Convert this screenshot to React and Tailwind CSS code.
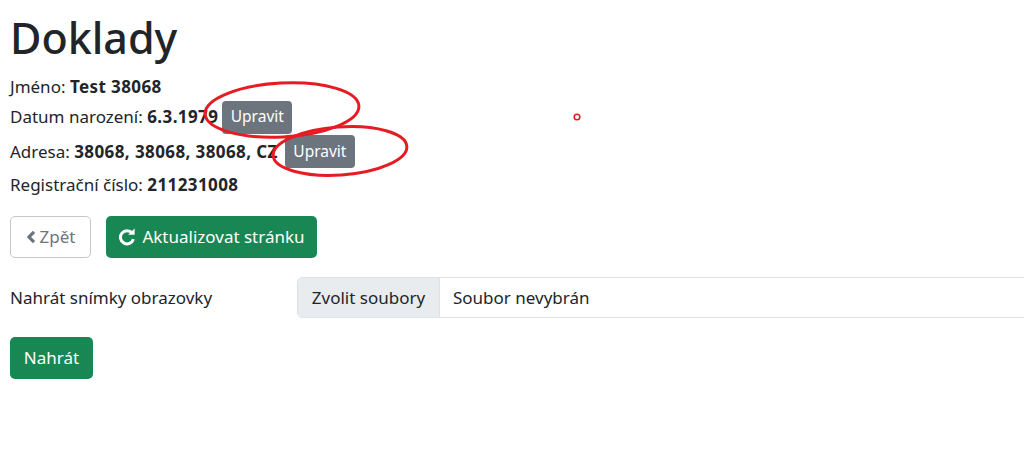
import React from 'react'

const font = { fontFamily: '"Noto Sans", "Open Sans", Arial, sans-serif' }

const ChevronLeft = () => (
  <svg width="10" height="14" viewBox="0 0 10 14" className="shrink-0">
    <path d="M8 1.8 L3 7 L8 12.2" fill="none" stroke="currentColor" strokeWidth="3.2" strokeLinejoin="miter" />
  </svg>
)

const Redo = () => (
  <svg width="18" height="18" viewBox="0 0 18 18" className="shrink-0">
    <path d="M14.2 5.2 A6.6 6.6 0 1 0 15.4 11.2" fill="none" stroke="currentColor" strokeWidth="3" />
    <path d="M10.2 6.8 L16.6 6.8 L16.6 0.6 Z" fill="currentColor" />
  </svg>
)

const Marks = () => (
  <svg className="absolute inset-0 pointer-events-none" width="1024" height="464">
    <g fill="none" stroke="#e61c24" strokeWidth="3">
      <ellipse cx="282" cy="110" rx="77" ry="27" transform="rotate(-3 282 110)" />
      <ellipse cx="340" cy="151" rx="67" ry="24" transform="rotate(-4 340 151)" />
      <circle cx="577" cy="117" r="2.8" strokeWidth="1.6" />
    </g>
  </svg>
)

export default function App() {
  return (
    <div className="relative w-[1024px] h-[464px] overflow-hidden bg-white text-[#212529] text-[17px]" style={font}>
      <div className="pl-[10px] pt-[12px]">
        <h1 className="text-[43px] leading-[52px] font-medium mb-[10px]">Doklady</h1>

        <div className="h-[26px] flex items-center">
          <span>Jméno: <b className="font-bold tracking-[0.4px]">Test 38068</b></span>
        </div>
        <div className="h-[34px] flex items-center">
          <span>Datum narození: <b className="font-bold tracking-[0.4px]">6.3.1979</b></span>
          <button className="ml-[4px] h-[33px] w-[70px] rounded-[4px] bg-[#6c757d] text-white text-[15.5px]">Upravit</button>
        </div>
        <div className="h-[35px] flex items-center">
          <span>Adresa: <b className="font-bold tracking-[0.4px]">38068, 38068, 38068, CZ</b></span>
          <button className="ml-[7px] h-[33px] w-[70px] rounded-[4px] bg-[#6c757d] text-white text-[15.5px]">Upravit</button>
        </div>
        <div className="h-[30px] flex items-center mt-[1px]">
          <span>Registrační číslo: <b className="font-bold tracking-[0.4px]">211231008</b></span>
        </div>

        <div className="flex gap-[15px] mt-[16px]">
          <button className="h-[42px] w-[81px] flex items-center justify-center gap-[4px] rounded-[5px] border border-[#c3c7cb] text-[#6c757d]">
            <ChevronLeft />
            Zpět
          </button>
          <button className="h-[42px] w-[211px] flex items-center justify-center gap-[6px] rounded-[5px] bg-[#198754] text-white">
            <Redo />
            Aktualizovat stránku
          </button>
        </div>

        <div className="flex items-center mt-[19px]">
          <label className="w-[287px] shrink-0">Nahrát snímky obrazovky</label>
          <div className="flex shrink-0 h-[41px] w-[800px] rounded-[5px] border border-[#dee2e6] overflow-hidden">
            <div className="w-[142px] flex items-center justify-center bg-[#e9ecef] border-r border-[#dee2e6]">Zvolit soubory</div>
            <div className="flex items-center px-[13px]">Soubor nevybrán</div>
          </div>
        </div>

        <button className="mt-[19px] h-[42px] w-[83px] rounded-[5px] bg-[#198754] text-white">Nahrát</button>
      </div>
      <Marks />
    </div>
  )
}
